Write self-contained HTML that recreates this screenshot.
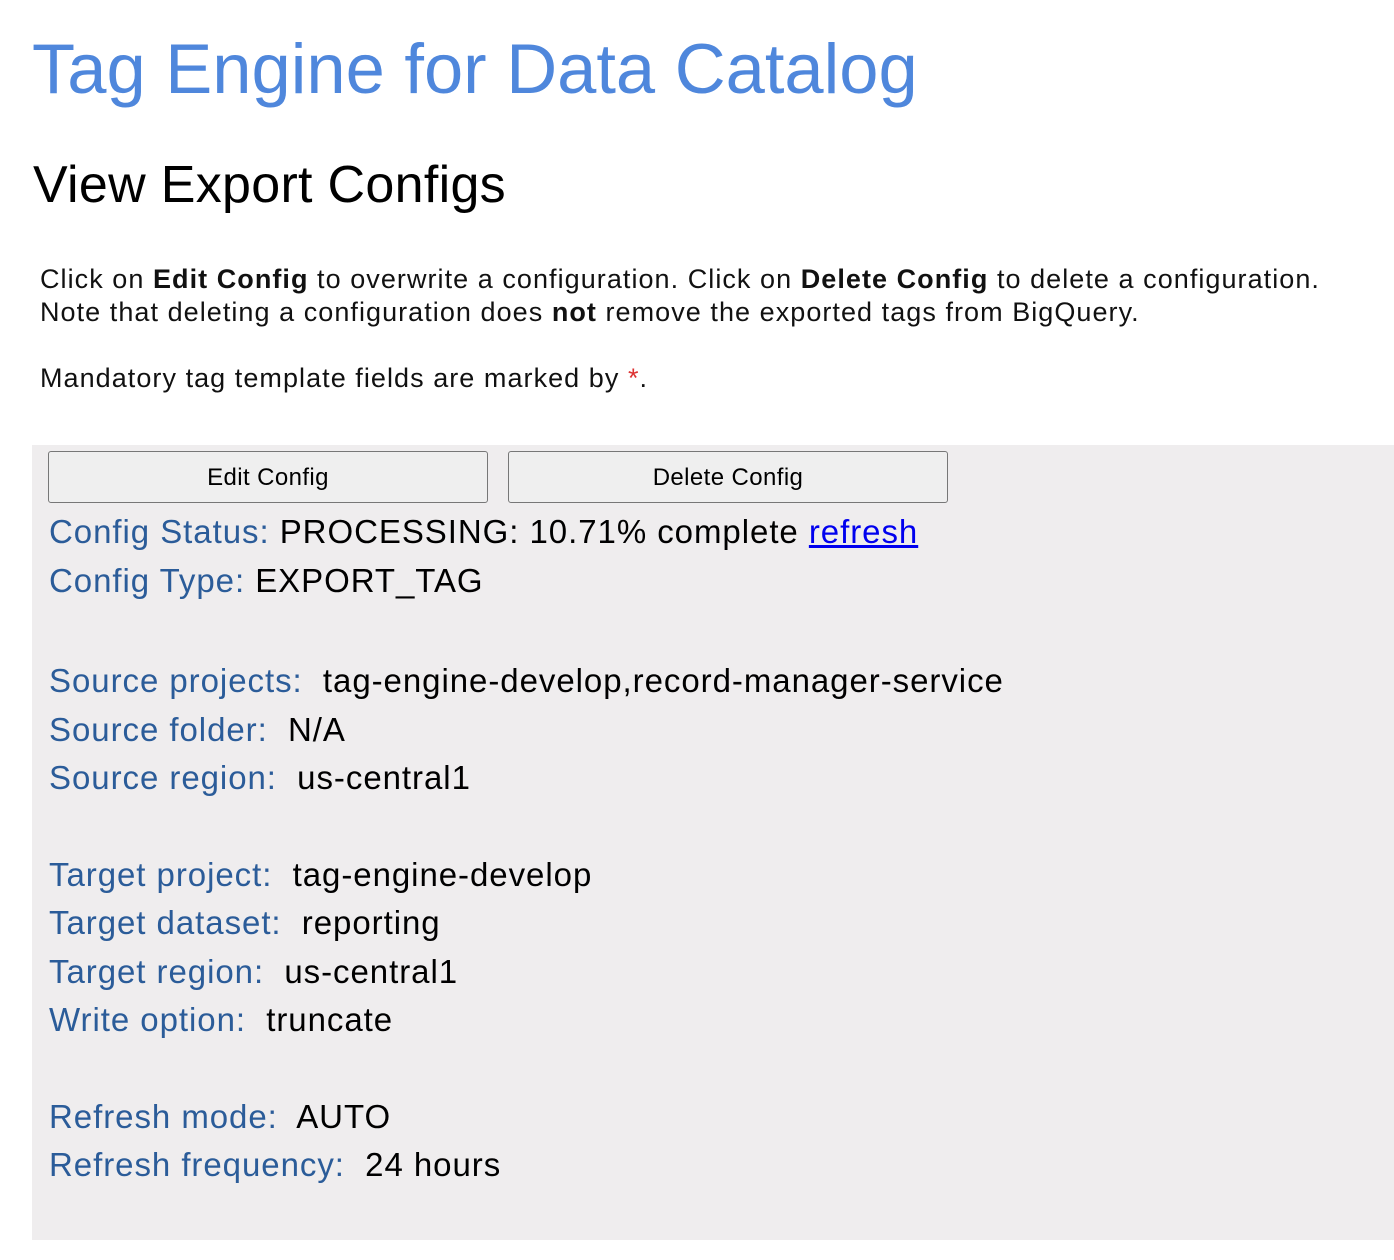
<!DOCTYPE html>
<html><head><style>
body{margin:0;background:#fff;font-family:"Liberation Sans",Arial,sans-serif;width:1394px;height:1260px;overflow:hidden;position:relative}
h1{position:absolute;left:32px;top:24px;margin:0;font-weight:normal;font-size:70.5px;color:#4f87dc;line-height:90px;white-space:nowrap}
h2{position:absolute;left:33px;top:152px;margin:0;font-weight:normal;font-size:52px;letter-spacing:0.3px;color:#000;line-height:66px;white-space:nowrap}
.p{position:absolute;left:40px;font-size:27px;letter-spacing:1.05px;line-height:33px;color:#111;white-space:nowrap}
.box{position:absolute;left:32px;top:445px;width:1362px;height:795px;background:#efedee}
.btn{position:absolute;top:451px;width:440px;height:52px;border:1px solid #777;border-radius:3px;background:#efefef;font-size:24px;letter-spacing:0.4px;text-align:center;line-height:52px;box-sizing:border-box;color:#000}
.r{position:absolute;left:49px;font-size:33px;letter-spacing:0.95px;line-height:40px;color:#000;white-space:nowrap}
.r b{font-weight:normal;color:#2b5c99}
a{color:#0000ee}
</style></head><body>
<h1>Tag Engine for Data Catalog</h1>
<h2>View Export Configs</h2>
<div class="p" style="top:263px">Click on <b>Edit Config</b> to overwrite a configuration. Click on <b>Delete Config</b> to delete a configuration.<br>Note that deleting a configuration does <b>not</b> remove the exported tags from BigQuery.</div>
<div class="p" style="top:362px">Mandatory tag template fields are marked by <span style="color:#d33">*</span>.</div>
<div class="box"></div>
<div class="btn" style="left:48px">Edit Config</div>
<div class="btn" style="left:508px">Delete Config</div>
<div class="r" style="top:512px"><b>Config Status:</b> PROCESSING: 10.71% complete <a href="#">refresh</a></div>
<div class="r" style="top:561px"><b>Config Type:</b> EXPORT_TAG</div>
<div class="r" style="top:661px"><b>Source projects:</b>&nbsp; tag-engine-develop,record-manager-service</div>
<div class="r" style="top:710px"><b>Source folder:</b>&nbsp; N/A</div>
<div class="r" style="top:758px"><b>Source region:</b>&nbsp; us-central1</div>
<div class="r" style="top:855px"><b>Target project:</b>&nbsp; tag-engine-develop</div>
<div class="r" style="top:903px"><b>Target dataset:</b>&nbsp; reporting</div>
<div class="r" style="top:952px"><b>Target region:</b>&nbsp; us-central1</div>
<div class="r" style="top:1000px"><b>Write option:</b>&nbsp; truncate</div>
<div class="r" style="top:1097px"><b>Refresh mode:</b>&nbsp; AUTO</div>
<div class="r" style="top:1145px"><b>Refresh frequency:</b>&nbsp; 24 hours</div>
</body></html>
